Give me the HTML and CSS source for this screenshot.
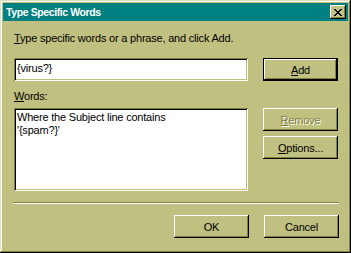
FILE: index.html
```html
<!DOCTYPE html>
<html lang="en">
<head>
  <meta charset="UTF-8">
  <title>Type Specific Words</title>
  <link rel="stylesheet" href="styles.css">
</head>
<body>
  <div class="window">
    <div class="titlebar">
      <span class="title">Type Specific Words</span>
      <button class="close-btn" aria-label="Close">
        <svg width="8" height="7" viewBox="0 0 8 7">
          <path d="M0 0h2v1h1v1h2v-1h1v-1h2v1h-1v1h-1v1h-1v1h1v1h1v1h1v1h-2v-1h-1v-1h-2v1h-1v1h-2v-1h1v-1h1v-1h1v-1h-1v-1h-1v-1h-1z" fill="#000"/>
        </svg>
      </button>
    </div>

    <div class="content">
      <div class="label label-top"><u>T</u>ype specific words or a phrase, and click Add.</div>

      <div class="row row-input">
        <div class="field">{virus?}</div>
        <button class="btn default"><u>A</u>dd</button>
      </div>

      <div class="label label-words"><u>W</u>ords:</div>

      <div class="row row-list">
        <div class="field listbox">
          <div>Where the Subject line contains</div>
          <div>'{spam?}'</div>
        </div>
        <div class="side-buttons">
          <button class="btn disabled"><u>R</u>emove</button>
          <button class="btn"><u>O</u>ptions...</button>
        </div>
      </div>

      <div class="separator"></div>

      <div class="footer">
        <button class="btn">OK</button>
        <button class="btn">Cancel</button>
      </div>
    </div>
  </div>
</body>
</html>
```

FILE: styles.css
```css
body {
  margin: 0;
  background: #c0c080;
  font-family: "Liberation Sans", Arial, sans-serif;
  font-size: 11px;
  line-height: 13px;
  letter-spacing: -0.2px;
  color: #000;
}

.window {
  width: 351px;
  height: 253px;
  box-sizing: border-box;
  padding: 3px;
  background: #c0c080;
  box-shadow: inset -1px -1px 0 #000, inset 1px 1px 0 #e0e0c0,
              inset -2px -2px 0 #808040, inset 2px 2px 0 #fff;
}

/* 标题栏 */
.titlebar {
  height: 18px;
  background: #008080;
  display: flex;
  align-items: center;
  justify-content: space-between;
  padding: 0 2px 0 3px;
}

.title {
  color: #fff;
  font-weight: bold;
  font-size: 10.5px;
  letter-spacing: -0.4px;
}

.close-btn {
  width: 16px;
  height: 14px;
  padding: 0;
  border: none;
  background: #c0c080;
  display: flex;
  align-items: center;
  justify-content: center;
  box-shadow: inset -1px -1px 0 #000, inset 1px 1px 0 #fff,
              inset -2px -2px 0 #808040;
}

.content {
  padding: 11px 9px 0 11px;
}

.label-top {
  margin-bottom: 13px;
}

.row {
  display: flex;
  gap: 15px;
}

/* 凹陷的输入框 */
.field {
  width: 234px;
  height: 23px;
  box-sizing: border-box;
  background: #fff;
  padding: 4px 3px;
  box-shadow: inset 1px 1px 0 #808040, inset -1px -1px 0 #fff,
              inset 2px 2px 0 #000, inset -2px -2px 0 #c0c080;
}

.label-words {
  margin-top: 9px;
  margin-bottom: 5px;
}

.listbox {
  height: 83px;
  padding: 3px 3px;
}

.side-buttons {
  display: flex;
  flex-direction: column;
  gap: 5px;
}

/* 凸起的按钮 */
.btn {
  width: 75px;
  height: 23px;
  padding: 0;
  border: none;
  background: #c0c080;
  font-family: inherit;
  font-size: 11px;
  letter-spacing: inherit;
  color: #000;
  box-shadow: inset -1px -1px 0 #000, inset 1px 1px 0 #fff,
              inset -2px -2px 0 #808040;
}

.btn.default {
  box-shadow: inset 0 0 0 1px #000, inset -2px -2px 0 #000,
              inset 2px 2px 0 #fff, inset -3px -3px 0 #808040;
}

.btn.disabled {
  color: #808040;
  text-shadow: 1px 1px 0 #fff;
}

.separator {
  height: 0;
  margin-top: 11px;
  border-top: 1px solid #808040;
  border-bottom: 1px solid #fff;
}

.footer {
  margin-top: 11px;
  display: flex;
  justify-content: flex-end;
  gap: 15px;
}
```
